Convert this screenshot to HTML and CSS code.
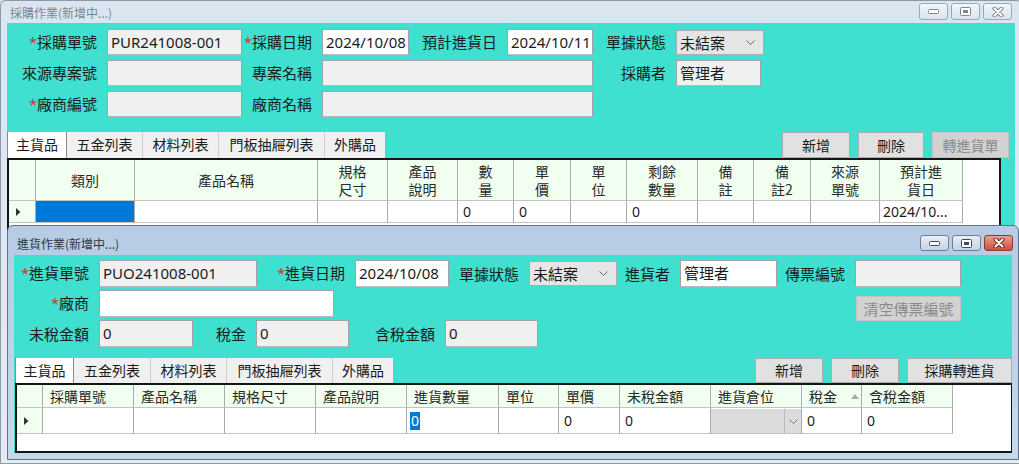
FILE: index.html
```html
<!DOCTYPE html>
<html lang="zh-Hant">
<head>
    <meta charset="UTF-8">
    <meta name="viewport" content="width=device-width, initial-scale=1.0">
    <link rel="stylesheet" href="styles.css">
</head>
<body>
    <!-- 採購作業 (inactive, behind) -->
    <div class="window win-purchase">
        <div class="titlebar">
            <span class="title">採購作業(新增中...)</span>
            <div class="caption">
                <span class="cap-btn"><svg width="11" height="5" viewBox="0 0 11 5"><rect x="0.5" y="0.5" width="10" height="4" rx="1" fill="#fff" stroke="#7a8797"/></svg></span>
                <span class="cap-btn"><svg width="11" height="9" viewBox="0 0 11 9"><rect x="0.5" y="0.5" width="10" height="8" rx="1" fill="#fff" stroke="#7a8797"/><rect x="3" y="3" width="5" height="3" fill="#7a8797"/></svg></span>
                <span class="cap-btn"><svg width="12" height="10" viewBox="0 0 12 10"><path d="M2.5 1.5 L9.5 8.5 M9.5 1.5 L2.5 8.5" stroke="#7a8797" stroke-width="4" stroke-linecap="round"/><path d="M2.5 1.5 L9.5 8.5 M9.5 1.5 L2.5 8.5" stroke="#fff" stroke-width="2" stroke-linecap="round"/></svg></span>
            </div>
        </div>
        <div class="client">
            <div class="form">
                <div class="row">
                    <span class="lbl req w100">採購單號</span>
                    <span class="field w135">PUR241008-001</span>
                    <span class="lbl req w80">採購日期</span>
                    <span class="field white w87">2024/10/08</span>
                    <span class="lbl w98">預計進貨日</span>
                    <span class="field white w86">2024/10/11</span>
                    <span class="lbl w83">單據狀態</span>
                    <span class="select w88">未結案<svg width="9" height="5" viewBox="0 0 9 5"><polyline points="0.5,0.5 4.5,4.5 8.5,0.5" fill="none" stroke="#6a6a6a"/></svg></span>
                </div>
                <div class="row">
                    <span class="lbl w100">來源專案號</span>
                    <span class="field w135"></span>
                    <span class="lbl w80">專案名稱</span>
                    <span class="field w271"></span>
                    <span class="lbl w83">採購者</span>
                    <span class="field w85">管理者</span>
                </div>
                <div class="row">
                    <span class="lbl req w100">廠商編號</span>
                    <span class="field w135"></span>
                    <span class="lbl w80">廠商名稱</span>
                    <span class="field w271"></span>
                </div>
            </div>

            <div class="toolbar">
                <div class="tabs">
                    <span class="tab active t60">主貨品</span>
                    <span class="tab t76">五金列表</span>
                    <span class="tab t76">材料列表</span>
                    <span class="tab t106">門板抽屜列表</span>
                    <span class="tab t60 last">外購品</span>
                </div>
                <div class="buttons">
                    <span class="btn b68">新增</span>
                    <span class="btn b66">刪除</span>
                    <span class="btn disabled b77">轉進貨單</span>
                </div>
            </div>

            <div class="grid grid-purchase">
                <div class="grid-row head">
                    <div class="cell rowhead"></div>
                    <div class="cell">類別</div>
                    <div class="cell">產品名稱</div>
                    <div class="cell">規格<br>尺寸</div>
                    <div class="cell">產品<br>說明</div>
                    <div class="cell">數<br>量</div>
                    <div class="cell">單<br>價</div>
                    <div class="cell">單<br>位</div>
                    <div class="cell">剩餘<br>數量</div>
                    <div class="cell">備<br>註</div>
                    <div class="cell">備<br>註2</div>
                    <div class="cell">來源<br>單號</div>
                    <div class="cell">預計進<br>貨日</div>
                </div>
                <div class="grid-row data">
                    <div class="cell rowhead"><svg width="5" height="8" viewBox="0 0 5 8"><polygon points="0,0 4.5,4 0,8" fill="#333"/></svg></div>
                    <div class="cell selected"></div>
                    <div class="cell"></div>
                    <div class="cell"></div>
                    <div class="cell"></div>
                    <div class="cell">0</div>
                    <div class="cell">0</div>
                    <div class="cell"></div>
                    <div class="cell">0</div>
                    <div class="cell"></div>
                    <div class="cell"></div>
                    <div class="cell"></div>
                    <div class="cell date">2024/10...</div>
                </div>
            </div>
        </div>
    </div>

    <!-- 進貨作業 (active, front) -->
    <div class="window win-receive">
        <div class="titlebar">
            <span class="title">進貨作業(新增中...)</span>
            <div class="caption">
                <span class="cap-btn"><svg width="11" height="5" viewBox="0 0 11 5"><rect x="0.5" y="0.5" width="10" height="4" rx="1" fill="#fff" stroke="#3b4a5e"/></svg></span>
                <span class="cap-btn"><svg width="11" height="9" viewBox="0 0 11 9"><rect x="0.5" y="0.5" width="10" height="8" rx="1" fill="#fff" stroke="#3b4a5e"/><rect x="3" y="3" width="5" height="3" fill="#3b4a5e"/></svg></span>
                <span class="cap-btn close"><svg width="12" height="10" viewBox="0 0 12 10"><path d="M2.5 1.5 L9.5 8.5 M9.5 1.5 L2.5 8.5" stroke="#6b2a1f" stroke-width="4" stroke-linecap="round"/><path d="M2.5 1.5 L9.5 8.5 M9.5 1.5 L2.5 8.5" stroke="#fff" stroke-width="2" stroke-linecap="round"/></svg></span>
            </div>
        </div>
        <div class="client">
            <div class="form">
                <div class="row">
                    <span class="lbl req w85">進貨單號</span>
                    <span class="field w158">PUO241008-001</span>
                    <span class="lbl req w98">進貨日期</span>
                    <span class="field white w94">2024/10/08</span>
                    <span class="lbl w80">單據狀態</span>
                    <span class="select w88">未結案<svg width="9" height="5" viewBox="0 0 9 5"><polyline points="0.5,0.5 4.5,4.5 8.5,0.5" fill="none" stroke="#6a6a6a"/></svg></span>
                    <span class="lbl w63">進貨者</span>
                    <span class="field white w97">管理者</span>
                    <span class="lbl w78">傳票編號</span>
                    <span class="field w106"></span>
                </div>
                <div class="row">
                    <span class="lbl req w85">廠商</span>
                    <span class="field white w235"></span>
                    <span class="btn disabled clear-btn">清空傳票編號</span>
                </div>
                <div class="row">
                    <span class="lbl w85">未稅金額</span>
                    <span class="field w94">0</span>
                    <span class="lbl w63">稅金</span>
                    <span class="field w93">0</span>
                    <span class="lbl w96">含稅金額</span>
                    <span class="field w93">0</span>
                </div>
            </div>

            <div class="toolbar">
                <div class="tabs">
                    <span class="tab active t59">主貨品</span>
                    <span class="tab t77">五金列表</span>
                    <span class="tab t76">材料列表</span>
                    <span class="tab t106">門板抽屜列表</span>
                    <span class="tab t60 last">外購品</span>
                </div>
                <div class="buttons">
                    <span class="btn b68">新增</span>
                    <span class="btn b68">刪除</span>
                    <span class="btn b105">採購轉進貨</span>
                </div>
            </div>

            <div class="grid grid-receive">
                <div class="grid-row head">
                    <div class="cell rowhead"></div>
                    <div class="cell">採購單號</div>
                    <div class="cell">產品名稱</div>
                    <div class="cell">規格尺寸</div>
                    <div class="cell">產品說明</div>
                    <div class="cell">進貨數量</div>
                    <div class="cell">單位</div>
                    <div class="cell">單價</div>
                    <div class="cell">未稅金額</div>
                    <div class="cell">進貨倉位</div>
                    <div class="cell">稅金<span class="sort-up"></span></div>
                    <div class="cell">含稅金額</div>
                </div>
                <div class="grid-row data">
                    <div class="cell rowhead"><svg width="5" height="8" viewBox="0 0 5 8"><polygon points="0,0 4.5,4 0,8" fill="#333"/></svg></div>
                    <div class="cell"></div>
                    <div class="cell"></div>
                    <div class="cell"></div>
                    <div class="cell"></div>
                    <div class="cell editing"><span class="sel-text">0</span></div>
                    <div class="cell"></div>
                    <div class="cell">0</div>
                    <div class="cell">0</div>
                    <div class="cell combo"><span class="combo-btn"><svg width="9" height="5" viewBox="0 0 9 5"><polyline points="0.5,0.5 4.5,4.5 8.5,0.5" fill="none" stroke="#777"/></svg></span></div>
                    <div class="cell">0</div>
                    <div class="cell">0</div>
                </div>
            </div>
        </div>
    </div>
</body>
</html>
```

FILE: styles.css
```css
* {
    box-sizing: border-box;
}

body {
    margin: 0;
    width: 1019px;
    height: 464px;
    overflow: hidden;
    position: relative;
    background-color: #d3d7db;
    font-family: "Noto Sans", "Noto Sans CJK TC", sans-serif;
    color: #1b1b1b;
}

/* windows */
.window {
    position: absolute;
    border: 1px solid #8c99a8;
    overflow: hidden;
}

.win-purchase {
    left: 0;
    top: 0;
    width: 1022px;
    height: 464px;
    padding: 0 6px 6px 6px;
    background: linear-gradient(#dbe5f0, #e4ebf3);
    border-radius: 6px 6px 0 0;
}

.win-receive {
    left: 7px;
    top: 225px;
    width: 1012px;
    height: 235px;
    padding: 0 6px 6px 6px;
    background: linear-gradient(#b7cbe4, #c6d8ed);
    border-color: #62738a;
    border-radius: 6px 6px 0 0;
}

.titlebar {
    display: flex;
    justify-content: space-between;
    align-items: flex-start;
}

.win-purchase .titlebar {
    height: 22px;
    padding: 2px 3px 0 3px;
}

.win-receive .titlebar {
    height: 29px;
    padding: 9px 0 0 3px;
    margin-right: -1px;
}

.title {
    font-size: 12px;
    line-height: 18px;
    font-family: "Noto Sans CJK TC", sans-serif;
}

.win-purchase .title {
    color: #7b8592;
    margin-top: 1px;
}

.win-receive .title {
    color: #2e3440;
}

.caption {
    display: flex;
    gap: 3px;
}

.cap-btn {
    width: 29px;
    height: 17px;
    display: flex;
    align-items: center;
    justify-content: center;
    border: 1px solid #9aa8b8;
    border-radius: 3px;
    background: linear-gradient(#f3f6fa, #dbe3ed);
}

.win-receive .cap-btn {
    height: 16px;
    border-color: #6d7f96;
    background: linear-gradient(#e9eff7, #c3d2e5);
}

.win-receive .cap-btn.close {
    border-color: #8c3a2c;
    background: linear-gradient(#eaa08e, #c9523c);
}

.client {
    background-color: #40e0d0;
    display: flex;
    flex-direction: column;
    overflow: hidden;
}

.win-purchase .client {
    padding-top: 6px;
    height: 435px;
}

.win-receive .client {
    padding: 5px 0 0 1px;
    height: 198px;
}

/* form */
.form {
    display: flex;
    flex-direction: column;
    gap: 5px;
}

.win-receive .form {
    gap: 3px;
}

.row {
    display: flex;
    align-items: center;
    height: 26px;
}

.win-receive .row {
    height: 27px;
    margin-left: -1px;
}

.lbl {
    flex: none;
    font-size: 15px;
    line-height: 26px;
    text-align: right;
    padding-right: 10px;
    white-space: nowrap;
}

.lbl.req::before {
    content: "*";
    color: #e0302a;
    font-size: 14px;
}

.field {
    flex: none;
    height: 26px;
    border: 1px solid #a3a3a3;
    border-bottom-color: #b9b9b9;
    background-color: #f0f0f0;
    font-size: 15px;
    line-height: 24px;
    padding: 0 3px;
    white-space: nowrap;
    overflow: hidden;
}

.win-receive .field {
    height: 27px;
    line-height: 25px;
}

.field.white {
    background-color: #fff;
}

.select {
    flex: none;
    height: 25px;
    display: flex;
    align-items: center;
    justify-content: space-between;
    border: 1px solid #adadad;
    background-color: #e5e5e5;
    font-size: 15px;
    padding: 0 8px 0 3px;
}

.w63 { width: 63px; }
.w78 { width: 78px; }
.w80 { width: 80px; }
.w83 { width: 83px; }
.w85 { width: 85px; }
.w86 { width: 86px; }
.w87 { width: 87px; }
.w88 { width: 88px; }
.w93 { width: 93px; }
.w94 { width: 94px; }
.w96 { width: 96px; }
.w97 { width: 97px; }
.w98 { width: 98px; }
.w100 { width: 100px; }
.w106 { width: 106px; }
.w135 { width: 135px; }
.w158 { width: 158px; }
.w235 { width: 235px; }
.w271 { width: 271px; }

/* buttons */
.btn {
    flex: none;
    height: 26px;
    border: 1px solid #adadad;
    background-color: #e1e1e1;
    font-size: 14px;
    line-height: 24px;
    text-align: center;
    font-family: "Noto Sans CJK TC", sans-serif;
}

.btn.disabled {
    color: #8a8a8a;
    background-color: #d2d2d2;
    border-color: #c2c2c2;
}

.b66 { width: 66px; }
.b68 { width: 68px; }
.b77 { width: 77px; }
.b105 { width: 105px; }

.clear-btn {
    width: 105px;
    height: 30px;
    line-height: 28px;
    font-size: 15px;
    margin: 6px 51px 0 auto;
    align-self: flex-start;
}

/* tabs + buttons line */
.toolbar {
    display: flex;
    justify-content: space-between;
    align-items: flex-end;
    flex: none;
    height: 26px;
    margin-top: 15px;
}

.win-receive .toolbar {
    height: 25px;
    margin-top: 11px;
}

.buttons {
    display: flex;
    gap: 8px;
    padding-right: 6px;
}

.win-receive .buttons {
    padding-right: 0;
}

.win-receive .btn {
    height: 25px;
    line-height: 23px;
}

.tabs {
    display: flex;
    height: 100%;
    background-color: #f0f0f0;
}

.tab {
    font-size: 14px;
    line-height: 25px;
    text-align: center;
    border-right: 1px solid #cfcfcf;
    font-family: "Noto Sans CJK TC", sans-serif;
}

.tab.last {
    border-right: none;
}

.tab.active {
    background-color: #fff;
    border-left: 1px solid #8a8a8a;
    border-right: 1px solid #8a8a8a;
}

.t59 { width: 59px; }
.t60 { width: 60px; }
.t76 { width: 76px; }
.t77 { width: 77px; }
.t106 { width: 106px; }

/* data grids */
.grid {
    flex: none;
    border: 2px solid #141414;
    background-color: #fff;
    overflow: hidden;
}

.grid-purchase {
    width: 994px;
    height: 180px;
}

.grid-receive {
    width: 998px;
    height: 70px;
}

.grid-row {
    display: grid;
}

.grid-purchase .grid-row {
    grid-template-columns: 27px 99px 183px 70px 70px 56px 57px 56px 71px 56px 57px 69px 83px;
}

.grid-receive .grid-row {
    grid-template-columns: 26px 91px 91px 91px 91px 92px 60px 61px 91px 91px 60px 91px;
}

.cell {
    border-right: 1px solid #ababab;
    border-bottom: 1px solid #c3c3c3;
    font-size: 14px;
    font-family: "Noto Sans", "Noto Sans CJK TC", sans-serif;
    white-space: nowrap;
    overflow: hidden;
}

.head .cell {
    background-color: #f0fff0;
    color: #2a2a2a;
    font-family: "Noto Sans CJK TC", sans-serif;
}

.grid-purchase .head .cell {
    height: 41px;
    display: flex;
    align-items: center;
    justify-content: center;
    text-align: center;
    line-height: 18px;
}

.grid-receive .head .cell {
    height: 23px;
    line-height: 22px;
    padding-left: 7px;
    display: flex;
    align-items: center;
}

.rowhead {
    background-color: #f0fff0;
}

.data .cell {
    padding-left: 5px;
    display: flex;
    align-items: center;
}

.grid-purchase .data .cell {
    height: 22px;
}

.grid-receive .data .cell {
    height: 26px;
}

.data .rowhead {
    padding-left: 7px;
}

.data .cell.date {
    padding-left: 3px;
}

.cell.selected {
    background-color: #0078d7;
}

.cell.editing {
    padding-left: 3px;
}

.sel-text {
    background-color: #0078d7;
    color: #fff;
    line-height: 18px;
    padding: 0 1px;
}

.cell.combo {
    background-color: #dcdcdc;
    padding-left: 0;
    justify-content: flex-end;
    border-top: 1px solid #fff;
}

.combo-btn {
    width: 17px;
    height: 100%;
    border-left: 1px solid #b8b8b8;
    display: flex;
    align-items: center;
    justify-content: center;
}

.sort-up {
    width: 0;
    height: 0;
    margin-left: 14px;
    border-left: 4px solid transparent;
    border-right: 4px solid transparent;
    border-bottom: 5px solid #a8a8a8;
}
```
